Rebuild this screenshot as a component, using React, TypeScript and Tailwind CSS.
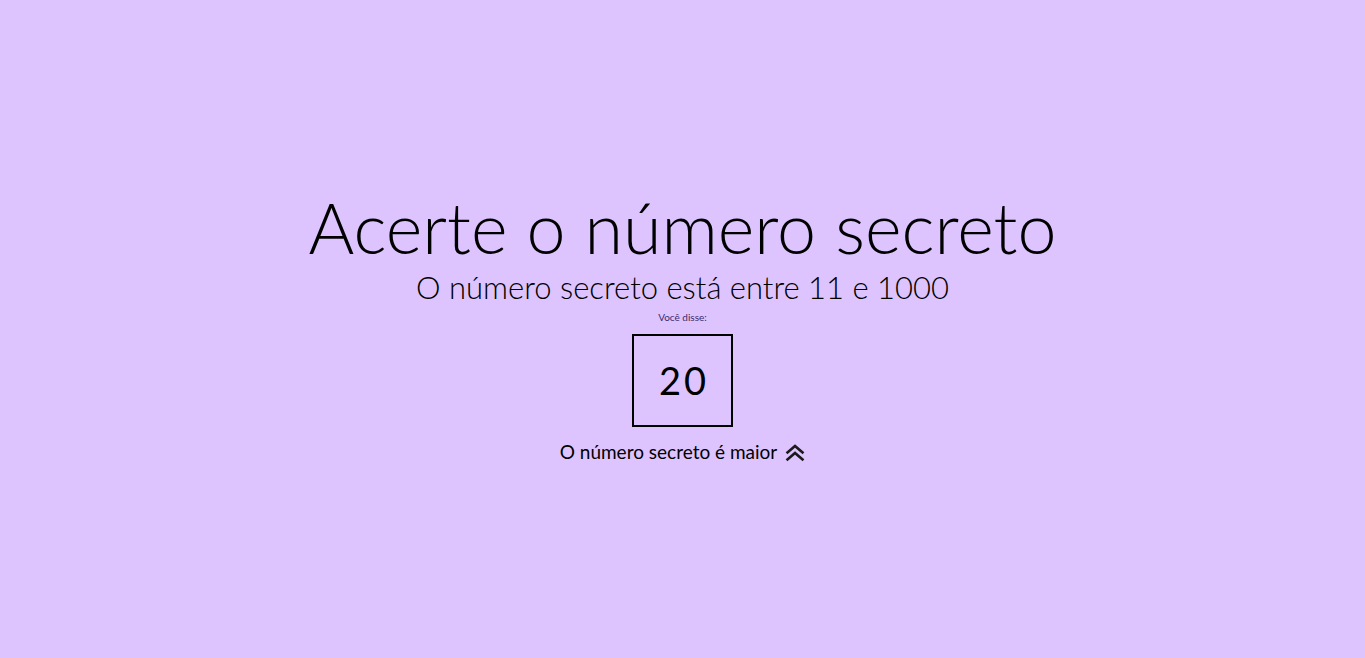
import React from "react";

function AngleDoubleUp() {
  return (
    <svg width="20" height="18" viewBox="0 0 20 18" fill="none" stroke="#1a1a1a" strokeWidth="2.6" strokeLinecap="square" className="mt-[2px]">
      <path d="M2.5 8.5L10 2l7.5 6.5" />
      <path d="M2.5 15.5L10 9l7.5 6.5" />
    </svg>
  );
}

export default function App() {
  return (
    <main className="flex flex-col items-center w-full h-screen pt-[192px] bg-[#ddc4ff] font-['Lato',sans-serif] text-black">
      {/* Título */}
      <h1 className="text-[70px] leading-[70px] font-light">Acerte o número secreto</h1>
      <h3 className="text-[31px] leading-[36px] font-light mt-[7px]">O número secreto está entre 11 e 1000</h3>

      {/* Chute */}
      <div className="flex flex-col items-center mt-[6px]">
        <span className="text-[10px] leading-[12px] text-[#3b2a6e]">Você disse:</span>
        <div className="flex items-center justify-center w-[101px] h-[93px] mt-[11px] border-2 border-black">
          <span className="text-[38px] font-normal tracking-[3px] pl-[3px]">20</span>
        </div>
        <div className="flex items-center gap-[8px] mt-[12px] text-[19px] leading-[26px]">
          <span>O número secreto é maior</span>
          <AngleDoubleUp />
        </div>
      </div>
    </main>
  );
}
